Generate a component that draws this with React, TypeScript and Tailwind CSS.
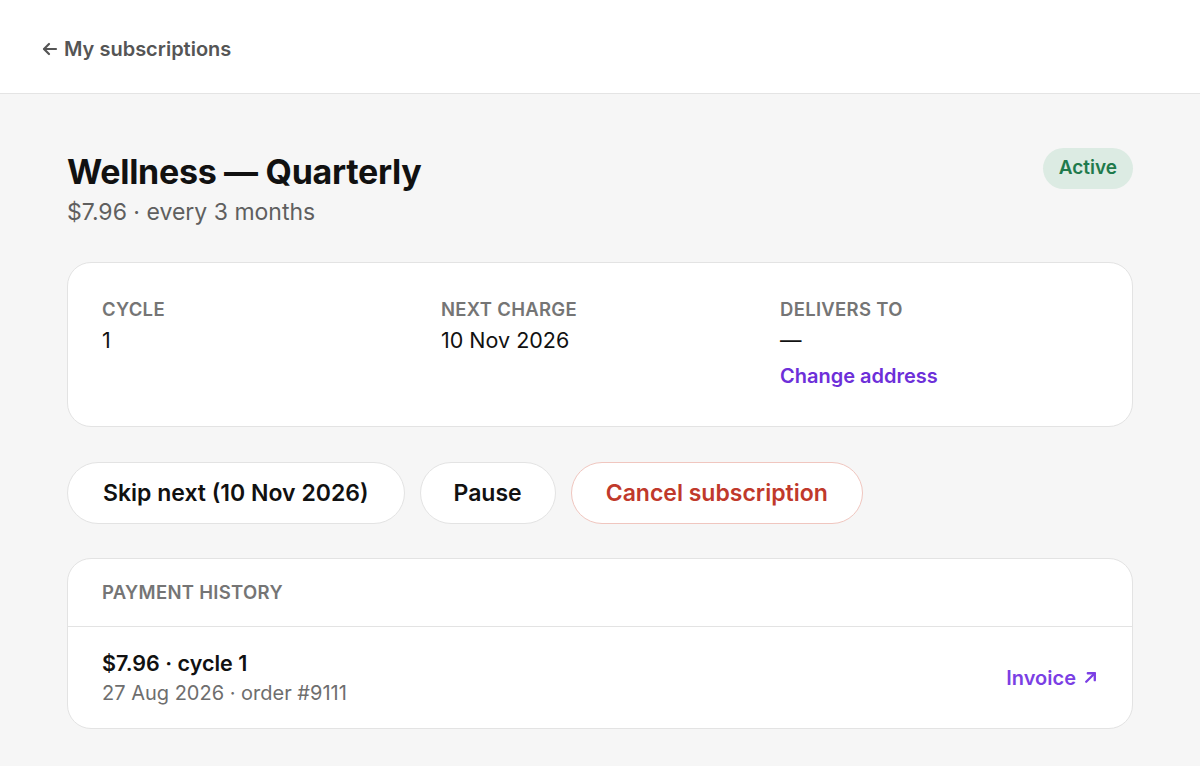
import React from "react";

export default function App() {
  return (
    <div className="min-h-[766px] bg-[#f6f6f6]" style={{ fontFamily: "Inter, 'Noto Sans', sans-serif" }}>
      <header className="h-[94px] bg-white border-b border-[#e4e4e4] flex items-center px-[42px] pt-[4px]">
        <a className="text-[20px] font-semibold text-[#555555] flex items-center gap-[6px]">
          <svg width="16" height="14" viewBox="0 0 16 14" fill="none" stroke="currentColor" strokeWidth="2.2" strokeLinecap="round" strokeLinejoin="round">
            <path d="M14 7H2.5" />
            <path d="M7 2L2 7L7 12" />
          </svg>
          <span>My subscriptions</span>
        </a>
      </header>
      <main className="px-[67px] pt-[57px] pb-[38px] flex flex-col">
        <div className="flex items-start justify-between">
          <div>
            <h1 className="text-[34px] font-bold text-[#111111] leading-[42px] tracking-[-0.3px]">Wellness — Quarterly</h1>
            <p className="text-[23px] text-[#5f5f5f] leading-[30px] mt-[4px]">$7.96 · every 3 months</p>
          </div>
          <span className="-mt-[3px] h-[41px] px-[16px] rounded-full bg-[#dcebe3] text-[#1f7a4c] text-[19px] font-semibold flex items-center">Active</span>
        </div>

        <section className="mt-[35px] bg-white border border-[#e3e3e3] rounded-[24px] px-[34px] pt-[35px] pb-[37px] grid grid-cols-3 gap-x-[21px]">
          <div>
            <div className="text-[18.5px] font-semibold text-[#757575] tracking-[0.3px] leading-[22px]">CYCLE</div>
            <div className="text-[21.5px] text-[#111111] leading-[30px] mt-[5px]">1</div>
          </div>
          <div>
            <div className="text-[18.5px] font-semibold text-[#757575] tracking-[0.3px] leading-[22px]">NEXT CHARGE</div>
            <div className="text-[21.5px] text-[#111111] leading-[30px] mt-[5px]">10 Nov 2026</div>
          </div>
          <div>
            <div className="text-[18.5px] font-semibold text-[#757575] tracking-[0.3px] leading-[22px]">DELIVERS TO</div>
            <div className="text-[21.5px] text-[#111111] leading-[30px] mt-[5px]">—</div>
            <a className="block text-[20px] font-semibold text-[#6d2fd9] leading-[26px] mt-[8px]">Change address</a>
          </div>
        </section>

        <div className="mt-[35px] flex gap-[15px]">
          <button className="h-[62px] px-[35px] rounded-full bg-white border border-[#e3e3e3] text-[23px] font-semibold text-[#111111]">Skip next (10 Nov 2026)</button>
          <button className="h-[62px] px-[33px] rounded-full bg-white border border-[#e3e3e3] text-[23px] font-semibold text-[#111111]">Pause</button>
          <button className="h-[62px] px-[34px] rounded-full bg-white border border-[#f0c6bf] text-[23px] font-semibold text-[#c0392b]">Cancel subscription</button>
        </div>

        <section className="mt-[34px] bg-white border border-[#e3e3e3] rounded-[24px] overflow-hidden">
          <div className="h-[68px] px-[34px] flex items-center border-b border-[#e3e3e3] text-[18.5px] font-semibold text-[#757575] tracking-[0.3px]">PAYMENT HISTORY</div>
          <div className="h-[101px] px-[34px] flex items-center justify-between">
            <div>
              <div className="text-[21.5px] font-semibold text-[#111111] leading-[30px]">$7.96 · cycle 1</div>
              <div className="text-[20px] text-[#6e6e6e] leading-[30px]">27 Aug 2026 · order #9111</div>
            </div>
            <a className="text-[20px] font-semibold text-[#7b3fe4] flex items-center gap-[7px]">
              Invoice
              <svg width="15" height="15" viewBox="0 0 14 14" fill="none" stroke="currentColor" strokeWidth="2.2" strokeLinecap="round" strokeLinejoin="round">
                <path d="M3 11L11 3" />
                <path d="M4.5 3H11V9.5" />
              </svg>
            </a>
          </div>
        </section>
      </main>
    </div>
  );
}
